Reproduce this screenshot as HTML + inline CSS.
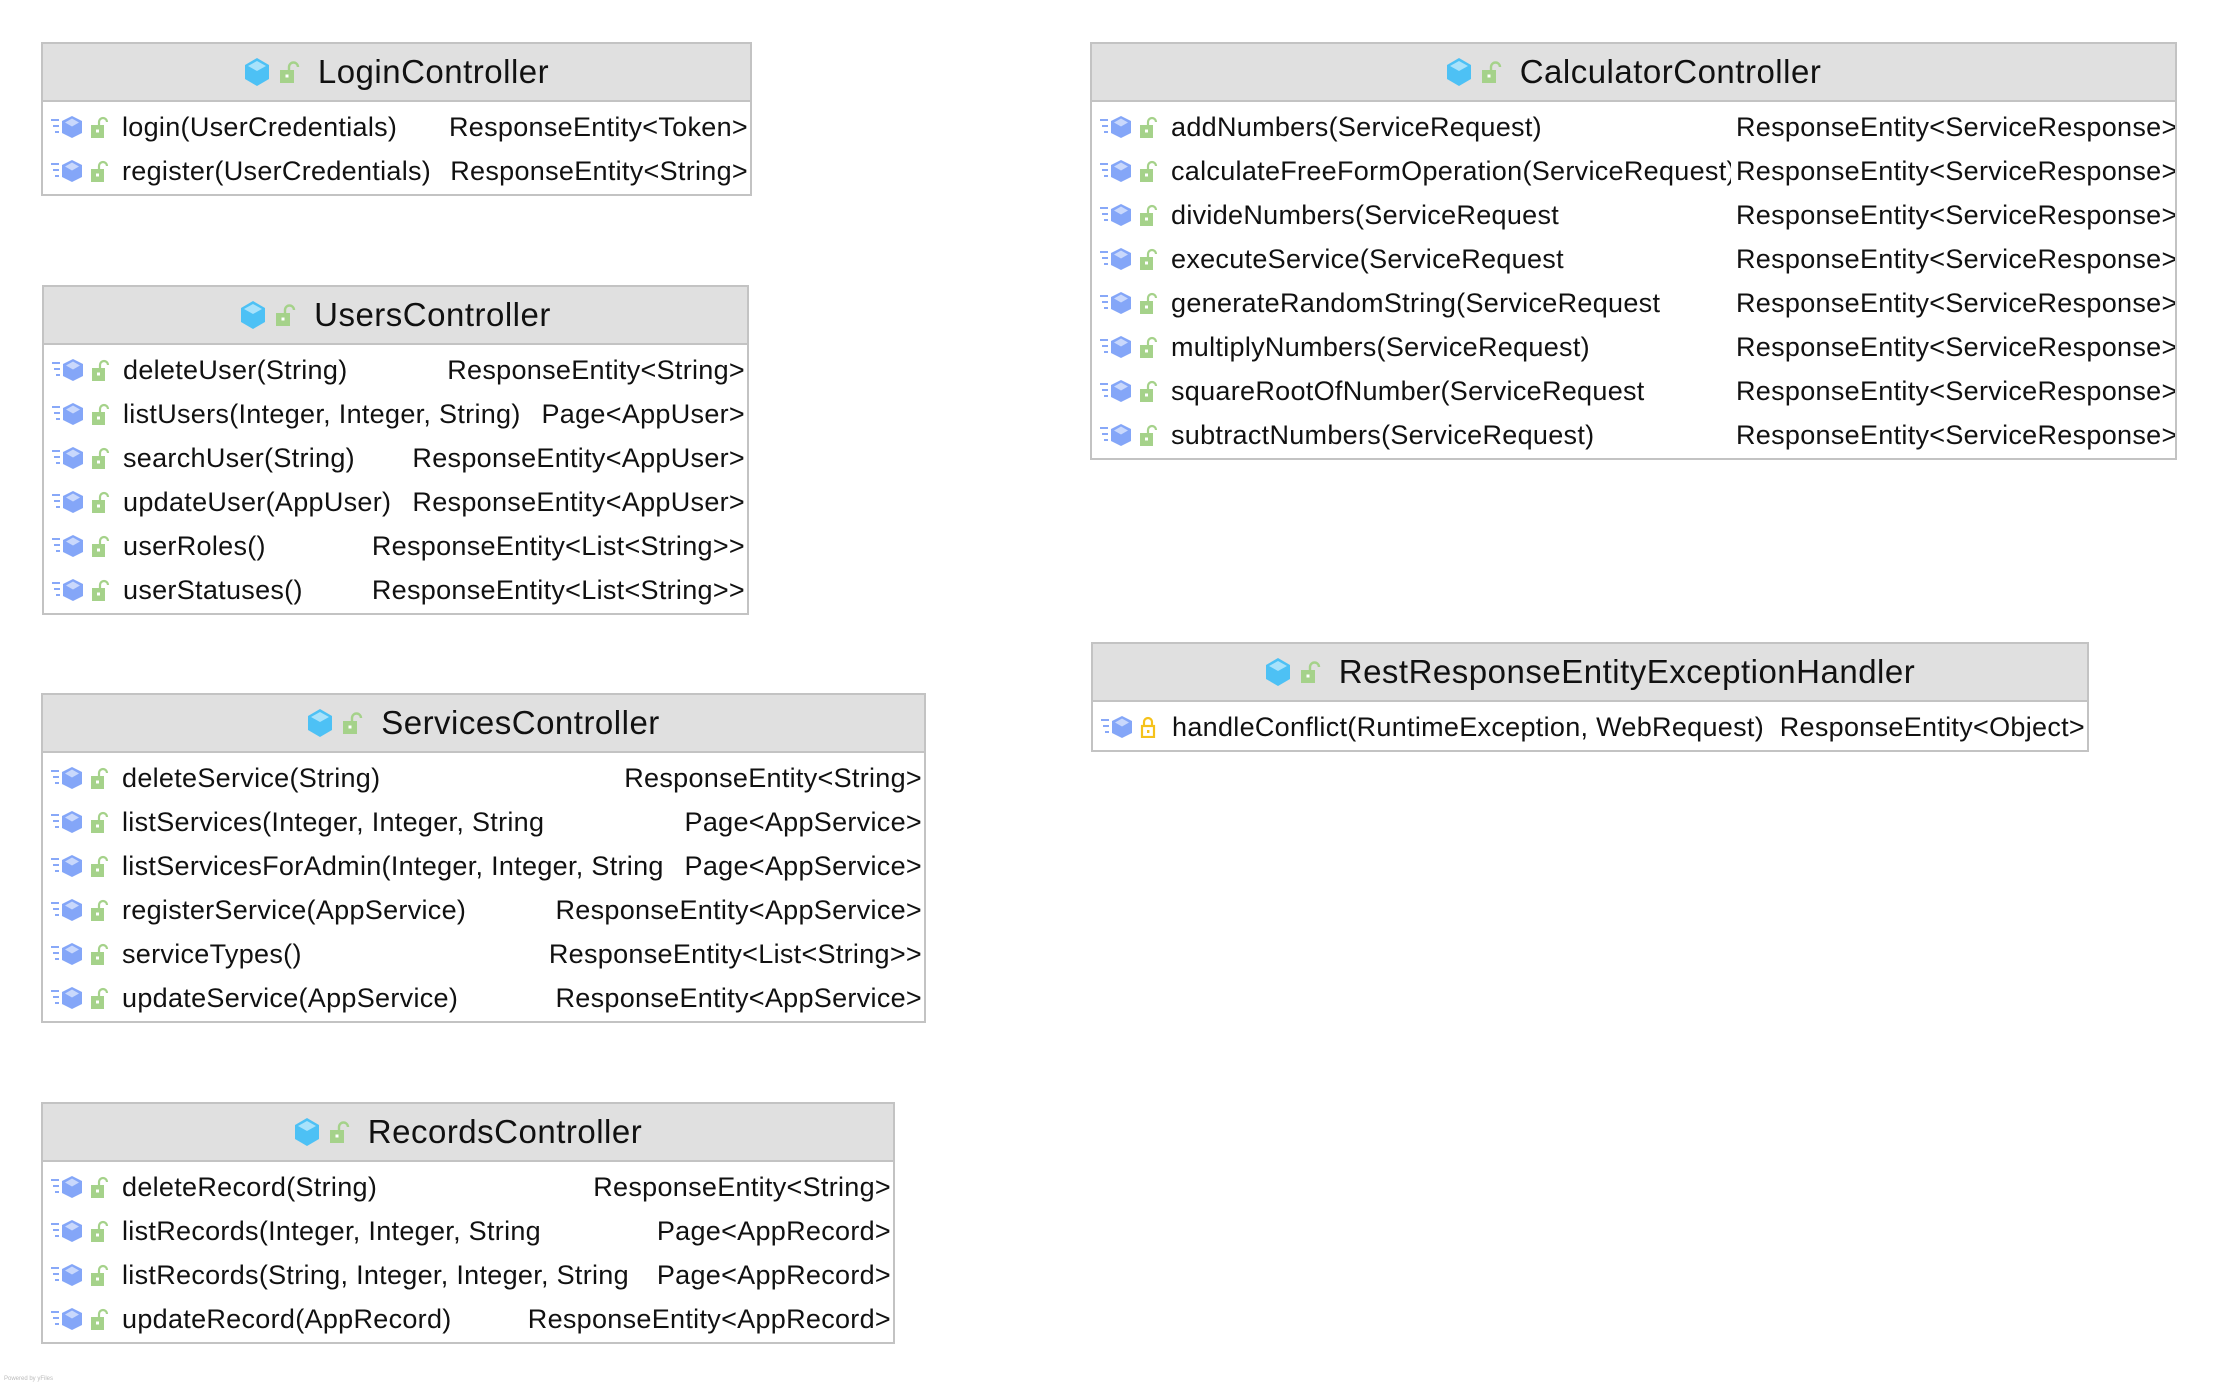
<!DOCTYPE html>
<html><head><meta charset="utf-8"><style>
*{box-sizing:border-box;margin:0;padding:0}
body{width:2218px;height:1384px;background:#fff;position:relative;overflow:hidden;font-family:"Liberation Sans",sans-serif;color:#111}
.box{position:absolute;border:2px solid #c3c3c3;background:#fff;overflow:hidden}
.hd{height:58px;background:#e0e0e0;border-bottom:2px solid #c3c3c3;display:flex;align-items:center;justify-content:center;font-size:33px;letter-spacing:0.5px}
.hd svg{margin-right:10px}
.bd{padding-top:3px;padding-bottom:1px}
.r{position:relative;height:44px;line-height:44px;font-size:27px;letter-spacing:0.3px;white-space:nowrap;overflow:hidden}
.r .ic{position:absolute;left:8px;top:11px}
.r .m{position:absolute;left:79px;top:0}
.r .t{position:absolute;right:2px;top:0;background:#fff;padding-left:4px}
.c .r .m{width:560px;overflow:hidden}
.c .r .t{right:auto;left:644px;padding-left:0}
</style></head><body>
<svg width="0" height="0" style="position:absolute">
<defs>
<symbol id="hx" viewBox="0 0 26 28"><polygon points="13,0 25,7 25,21 13,28 1,21 1,7" fill="#4dc1f5"/><polygon points="13,3 22,8 13,13 4,8" fill="#a8e2fb"/></symbol>
<symbol id="lk" viewBox="0 0 20 22"><path d="M9 10V6a4.5 4.5 0 0 1 9 0" fill="none" stroke="#a5d28a" stroke-width="2.4"/><rect x="0" y="9" width="14" height="13" fill="#a5d28a"/><rect x="5.5" y="13.5" width="3" height="3" fill="#fff"/></symbol>
<symbol id="mt" viewBox="0 0 72 22"><path d="M0 4h8M2 10h6M4 16h4" stroke="#88a8f8" stroke-width="2"/><polygon points="21,0 31,5 31,17 21,22 11,17 11,5" fill="#84a6f8"/><polygon points="21,2.5 28,6.5 21,10.5 14,6.5" fill="#c9d8fc"/><path d="M48 10V6a4 4 0 0 1 8 0" fill="none" stroke="#a5d28a" stroke-width="2.2"/><rect x="40" y="9" width="13" height="13" fill="#a5d28a"/><rect x="45" y="13.5" width="3" height="3" fill="#fff"/></symbol>
<symbol id="mp" viewBox="0 0 72 22"><path d="M0 4h8M2 10h6M4 16h4" stroke="#88a8f8" stroke-width="2"/><polygon points="21,0 31,5 31,17 21,22 11,17 11,5" fill="#84a6f8"/><polygon points="21,2.5 28,6.5 21,10.5 14,6.5" fill="#c9d8fc"/><path d="M43 11V6a4 4 0 0 1 8 0v5" fill="none" stroke="#f5c21b" stroke-width="2.2"/><rect x="41" y="10" width="12" height="11" fill="none" stroke="#f5c21b" stroke-width="2.2"/><rect x="46" y="14" width="2.4" height="3" fill="#f5c21b"/></symbol>
</defs></svg>

<div class="box" style="left:41px;top:42px;width:711px">
<div class="hd"><svg width="26" height="28"><use href="#hx"/></svg><svg width="20" height="22" style="margin-right:18px"><use href="#lk"/></svg>LoginController</div>
<div class="bd">
<div class="r"><svg class="ic" width="72" height="22"><use href="#mt"/></svg><span class="m">login(UserCredentials)</span><span class="t">ResponseEntity&lt;Token&gt;</span></div>
<div class="r"><svg class="ic" width="72" height="22"><use href="#mt"/></svg><span class="m">register(UserCredentials)</span><span class="t">ResponseEntity&lt;String&gt;</span></div>
</div></div>

<div class="box" style="left:42px;top:285px;width:707px">
<div class="hd"><svg width="26" height="28"><use href="#hx"/></svg><svg width="20" height="22" style="margin-right:18px"><use href="#lk"/></svg>UsersController</div>
<div class="bd">
<div class="r"><svg class="ic" width="72" height="22"><use href="#mt"/></svg><span class="m">deleteUser(String)</span><span class="t">ResponseEntity&lt;String&gt;</span></div>
<div class="r"><svg class="ic" width="72" height="22"><use href="#mt"/></svg><span class="m">listUsers(Integer, Integer, String)</span><span class="t">Page&lt;AppUser&gt;</span></div>
<div class="r"><svg class="ic" width="72" height="22"><use href="#mt"/></svg><span class="m">searchUser(String)</span><span class="t">ResponseEntity&lt;AppUser&gt;</span></div>
<div class="r"><svg class="ic" width="72" height="22"><use href="#mt"/></svg><span class="m">updateUser(AppUser)</span><span class="t">ResponseEntity&lt;AppUser&gt;</span></div>
<div class="r"><svg class="ic" width="72" height="22"><use href="#mt"/></svg><span class="m">userRoles()</span><span class="t">ResponseEntity&lt;List&lt;String&gt;&gt;</span></div>
<div class="r"><svg class="ic" width="72" height="22"><use href="#mt"/></svg><span class="m">userStatuses()</span><span class="t">ResponseEntity&lt;List&lt;String&gt;&gt;</span></div>
</div></div>

<div class="box" style="left:41px;top:693px;width:885px">
<div class="hd"><svg width="26" height="28"><use href="#hx"/></svg><svg width="20" height="22" style="margin-right:18px"><use href="#lk"/></svg>ServicesController</div>
<div class="bd">
<div class="r"><svg class="ic" width="72" height="22"><use href="#mt"/></svg><span class="m">deleteService(String)</span><span class="t">ResponseEntity&lt;String&gt;</span></div>
<div class="r"><svg class="ic" width="72" height="22"><use href="#mt"/></svg><span class="m">listServices(Integer, Integer, String</span><span class="t">Page&lt;AppService&gt;</span></div>
<div class="r"><svg class="ic" width="72" height="22"><use href="#mt"/></svg><span class="m">listServicesForAdmin(Integer, Integer, String</span><span class="t">Page&lt;AppService&gt;</span></div>
<div class="r"><svg class="ic" width="72" height="22"><use href="#mt"/></svg><span class="m">registerService(AppService)</span><span class="t">ResponseEntity&lt;AppService&gt;</span></div>
<div class="r"><svg class="ic" width="72" height="22"><use href="#mt"/></svg><span class="m">serviceTypes()</span><span class="t">ResponseEntity&lt;List&lt;String&gt;&gt;</span></div>
<div class="r"><svg class="ic" width="72" height="22"><use href="#mt"/></svg><span class="m">updateService(AppService)</span><span class="t">ResponseEntity&lt;AppService&gt;</span></div>
</div></div>

<div class="box" style="left:41px;top:1102px;width:854px">
<div class="hd"><svg width="26" height="28"><use href="#hx"/></svg><svg width="20" height="22" style="margin-right:18px"><use href="#lk"/></svg>RecordsController</div>
<div class="bd">
<div class="r"><svg class="ic" width="72" height="22"><use href="#mt"/></svg><span class="m">deleteRecord(String)</span><span class="t">ResponseEntity&lt;String&gt;</span></div>
<div class="r"><svg class="ic" width="72" height="22"><use href="#mt"/></svg><span class="m">listRecords(Integer, Integer, String</span><span class="t">Page&lt;AppRecord&gt;</span></div>
<div class="r"><svg class="ic" width="72" height="22"><use href="#mt"/></svg><span class="m">listRecords(String, Integer, Integer, String</span><span class="t">Page&lt;AppRecord&gt;</span></div>
<div class="r"><svg class="ic" width="72" height="22"><use href="#mt"/></svg><span class="m">updateRecord(AppRecord)</span><span class="t">ResponseEntity&lt;AppRecord&gt;</span></div>
</div></div>

<div class="box c" style="left:1090px;top:42px;width:1087px">
<div class="hd"><svg width="26" height="28"><use href="#hx"/></svg><svg width="20" height="22" style="margin-right:18px"><use href="#lk"/></svg>CalculatorController</div>
<div class="bd">
<div class="r"><svg class="ic" width="72" height="22"><use href="#mt"/></svg><span class="m">addNumbers(ServiceRequest)</span><span class="t">ResponseEntity&lt;ServiceResponse&gt;</span></div>
<div class="r"><svg class="ic" width="72" height="22"><use href="#mt"/></svg><span class="m">calculateFreeFormOperation(ServiceRequest)</span><span class="t">ResponseEntity&lt;ServiceResponse&gt;</span></div>
<div class="r"><svg class="ic" width="72" height="22"><use href="#mt"/></svg><span class="m">divideNumbers(ServiceRequest</span><span class="t">ResponseEntity&lt;ServiceResponse&gt;</span></div>
<div class="r"><svg class="ic" width="72" height="22"><use href="#mt"/></svg><span class="m">executeService(ServiceRequest</span><span class="t">ResponseEntity&lt;ServiceResponse&gt;</span></div>
<div class="r"><svg class="ic" width="72" height="22"><use href="#mt"/></svg><span class="m">generateRandomString(ServiceRequest</span><span class="t">ResponseEntity&lt;ServiceResponse&gt;</span></div>
<div class="r"><svg class="ic" width="72" height="22"><use href="#mt"/></svg><span class="m">multiplyNumbers(ServiceRequest)</span><span class="t">ResponseEntity&lt;ServiceResponse&gt;</span></div>
<div class="r"><svg class="ic" width="72" height="22"><use href="#mt"/></svg><span class="m">squareRootOfNumber(ServiceRequest</span><span class="t">ResponseEntity&lt;ServiceResponse&gt;</span></div>
<div class="r"><svg class="ic" width="72" height="22"><use href="#mt"/></svg><span class="m">subtractNumbers(ServiceRequest)</span><span class="t">ResponseEntity&lt;ServiceResponse&gt;</span></div>
</div></div>

<div class="box" style="left:1091px;top:642px;width:998px">
<div class="hd"><svg width="26" height="28"><use href="#hx"/></svg><svg width="20" height="22" style="margin-right:18px"><use href="#lk"/></svg>RestResponseEntityExceptionHandler</div>
<div class="bd">
<div class="r"><svg class="ic" width="72" height="22"><use href="#mp"/></svg><span class="m">handleConflict(RuntimeException, WebRequest)</span><span class="t">ResponseEntity&lt;Object&gt;</span></div>
</div></div>

<div style="position:absolute;left:4px;top:1376px;font-size:6px;color:#bbb">Powered by yFiles</div>
</body></html>
